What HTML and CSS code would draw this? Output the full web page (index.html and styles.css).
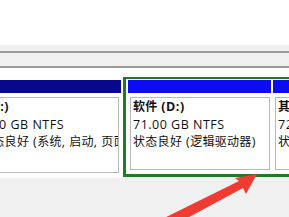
FILE: index.html
```html
<!DOCTYPE html>
<html lang="zh-CN">
<head>
<meta charset="utf-8">
<title>磁盘管理</title>
<link rel="stylesheet" href="styles.css">
</head>
<body>
<div class="page">
  <div class="volume-list"></div>
  <div class="band band-a"></div>
  <div class="rule"></div>
  <div class="band band-b"></div>
  <div class="rule"></div>
  <div class="disk">
    <div class="part primary">
      <div class="bar bar-primary"></div>
      <div class="box box-primary">
        <div class="txt">
          <div class="ln name name-c">(C:)</div>
          <div class="ln">1.00 GB NTFS</div>
          <div class="ln"><span class="cjk">状态良好</span> (<span class="cjk">系统</span>, <span class="cjk">启动</span>, <span class="cjk">页面文件</span>, <span class="cjk">活动</span>, <span class="cjk">故障转储</span>, <span class="cjk">主分区</span>)</div>
        </div>
      </div>
    </div>
    <div class="extended">
      <div class="part logical logical-d">
        <div class="bar bar-logical"></div>
        <div class="box">
          <div class="txt">
            <div class="ln name"><span class="cjk">软件</span> (D:)</div>
            <div class="ln">71.00 GB NTFS</div>
            <div class="ln"><span class="cjk">状态良好</span> (<span class="cjk">逻辑驱动器</span>)</div>
          </div>
        </div>
      </div>
      <div class="part logical logical-e">
        <div class="bar bar-logical"></div>
        <div class="box">
          <div class="txt">
            <div class="ln name"><span class="cjk">其他</span> (E:)</div>
            <div class="ln">72.00 GB NTFS</div>
            <div class="ln"><span class="cjk">状态良好</span> (<span class="cjk">逻辑驱动器</span>)</div>
          </div>
        </div>
      </div>
    </div>
  </div>
  <div class="below"></div>
  <svg class="arrow" width="289" height="217" viewBox="0 0 289 217">
    <polygon points="257,174 235,178 239,181 140,230 165,230 243,188 246,194" fill="#f03b32"/>
  </svg>
</div>
</body>
</html>
```

FILE: styles.css
```css
html, body {
  margin: 0;
  padding: 0;
}
body {
  width: 289px;
  height: 217px;
  overflow: hidden;
  background: #f0f0f0;
  font-family: "Open Sans", "Noto Sans CJK SC", sans-serif;
  font-size: 12.5px;
  letter-spacing: 0.5px;
  color: #111;
}
.page {
  position: relative;
  width: 289px;
  height: 217px;
  overflow: hidden;
}
.volume-list {
  height: 45px;
  background: #ffffff;
}
.band {
  background: #f0f0f0;
}
.band-a { height: 6px; }
.band-b { height: 13px; }
.rule {
  height: 2px;
  background: #9a9a9a;
}
.disk {
  display: flex;
  background: #ffffff;
  padding-top: 9px;
  height: 100px;
}
.part {
  display: flex;
  flex-direction: column;
  flex: none;
}
.primary {
  margin-left: -40px;
  width: 161px;
  padding-top: 3px;
  padding-bottom: 4px;
}
.bar {
  height: 13px;
  flex: none;
}
.bar-primary { background: #08088a; }
.bar-logical { background: #0c0cf2; }
.box {
  flex: 1;
  margin: 4px 1px 0 2px;
  border: 1px solid #b8b8b8;
  background: #fff;
  overflow: hidden;
}
.box-primary {
  margin: 4px 2px 0 0;
}
.txt {
  padding-left: 2px;
  white-space: nowrap;
}
.box-primary .txt {
  padding-left: 19px;
}
.ln {
  line-height: 17.5px;
}
.cjk {
  font-size: 12px;
  letter-spacing: 0.3px;
}
.name {
  font-weight: 700;
}
.name-c {
  padding-left: 7px;
}
.extended {
  flex: none;
  width: 220px;
  margin-left: 2px;
  display: flex;
  gap: 2px;
  border-left: 3px solid #1f7a2a;
  border-top: 2px solid #1f7a2a;
  border-bottom: 3px solid #1f7a2a;
  padding: 1px 0 4px 2px;
  box-sizing: border-box;
}
.logical-d {
  width: 143px;
}
.logical-e {
  width: 80px;
}
.below {
  height: 40px;
  border-top: 1px solid #fafafa;
}
.arrow {
  position: absolute;
  left: 0;
  top: 0;
}
```
